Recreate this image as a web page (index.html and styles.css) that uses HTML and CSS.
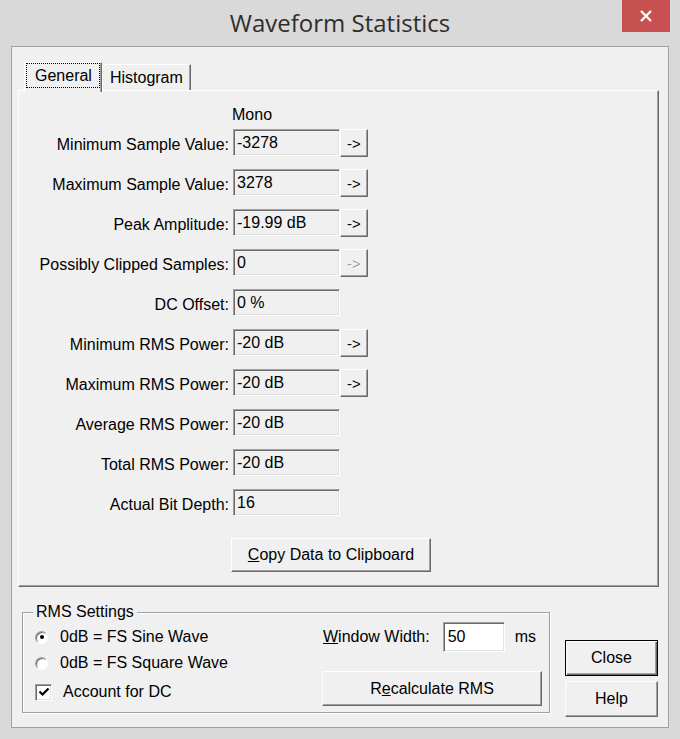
FILE: index.html
```html
<!DOCTYPE html>
<html>
<head>
<meta charset="utf-8">
<title>Waveform Statistics</title>
<link rel="stylesheet" href="styles.css">
</head>
<body>
<div class="window">
  <div class="titlebar">
    <h1 class="title">Waveform Statistics</h1>
    <div class="close-x">
      <svg width="12" height="12" viewBox="0 0 12 12"><path d="M1 1L11 11M11 1L1 11" stroke="#fff" stroke-width="2.3" fill="none"/></svg>
    </div>
  </div>
  <div class="client">
    <div class="tabs">
      <div class="tab active"><span class="focus">General</span></div>
      <div class="tab">Histogram</div>
    </div>
    <div class="panel">
      <div class="col-head">Mono</div>
      <div class="stats">
        <div class="label">Minimum Sample Value:</div>
        <div class="valcell"><div class="field">-3278</div><div class="btn arrow">-&gt;</div></div>
        <div class="label">Maximum Sample Value:</div>
        <div class="valcell"><div class="field">3278</div><div class="btn arrow">-&gt;</div></div>
        <div class="label">Peak Amplitude:</div>
        <div class="valcell"><div class="field">-19.99 dB</div><div class="btn arrow">-&gt;</div></div>
        <div class="label">Possibly Clipped Samples:</div>
        <div class="valcell"><div class="field">0</div><div class="btn arrow disabled">-&gt;</div></div>
        <div class="label">DC Offset:</div>
        <div class="valcell"><div class="field">0 %</div></div>
        <div class="label">Minimum RMS Power:</div>
        <div class="valcell"><div class="field">-20 dB</div><div class="btn arrow">-&gt;</div></div>
        <div class="label">Maximum RMS Power:</div>
        <div class="valcell"><div class="field">-20 dB</div><div class="btn arrow">-&gt;</div></div>
        <div class="label">Average RMS Power:</div>
        <div class="valcell"><div class="field">-20 dB</div></div>
        <div class="label">Total RMS Power:</div>
        <div class="valcell"><div class="field">-20 dB</div></div>
        <div class="label">Actual Bit Depth:</div>
        <div class="valcell"><div class="field">16</div></div>
      </div>
      <div class="btn copy"><span><u>C</u>opy Data to Clipboard</span></div>
    </div>
    <div class="bottom">
      <div class="group">
        <div class="group-title">RMS Settings</div>
        <div class="group-body">
          <div class="options">
            <div class="opt first"><span class="radio checked"></span><span>0dB = FS Sine Wave</span></div>
            <div class="opt"><span class="radio"></span><span>0dB = FS Square Wave</span></div>
            <div class="opt check-row"><span class="checkbox"><svg width="12" height="12" viewBox="0 0 12 12"><path d="M1.5 5.5L4.5 8.5L10.5 2.5" stroke="#000" stroke-width="2.2" fill="none"/></svg></span><span>Account for DC</span></div>
          </div>
          <div class="rms-right">
            <div class="ww-row">
              <span class="ww-label"><u>W</u>indow Width:</span>
              <div class="input">50</div>
              <span class="ms">ms</span>
            </div>
            <div class="btn recalc"><span>R<u>e</u>calculate RMS</span></div>
          </div>
        </div>
      </div>
      <div class="side">
        <div class="btn default">Close</div>
        <div class="btn">Help</div>
      </div>
    </div>
  </div>
</div>
</body>
</html>
```
FILE: styles.css
```css
* { box-sizing: border-box; }
html, body { margin: 0; padding: 0; }
body {
  width: 680px;
  height: 739px;
  overflow: hidden;
  background: #d9d9d9;
  font-family: "Liberation Sans", Arial, sans-serif;
  font-size: 16px;
  color: #000;
}
.window {
  height: 739px;
  display: flex;
  flex-direction: column;
}
.titlebar {
  height: 46px;
  display: grid;
  grid-template-columns: 1fr auto 1fr;
}
.title {
  grid-column: 2;
  align-self: center;
  margin: 0;
  font-family: "Open Sans", "Noto Sans", sans-serif;
  font-weight: 400;
  font-size: 24px;
  color: #2e2e2e;
  line-height: 30px;
}
.close-x {
  grid-column: 3;
  justify-self: end;
  align-self: start;
  width: 48px;
  height: 32px;
  margin-right: 10px;
  background: #c75050;
  display: flex;
  align-items: center;
  justify-content: center;
}
.client {
  flex: 1;
  margin: 0 11px 11px;
  background: #f0f0f0;
  border: 1px solid #a0a0a0;
  padding: 15px 9px 0 6px;
  display: flex;
  flex-direction: column;
}
.tabs {
  display: flex;
  align-items: flex-end;
  height: 28px;
  padding-left: 6px;
}
.tab {
  height: 26px;
  padding: 0 7px;
  border-left: 1px solid #fff;
  border-top: 1px solid #fff;
  border-right: 1px solid #696969;
  box-shadow: inset -1px 0 #a0a0a0;
  line-height: 25px;
  background: #f0f0f0;
}
.tab.active {
  height: 30px;
  margin-bottom: -2px;
  padding: 0 1px;
  position: relative;
  z-index: 1;
}
.focus {
  display: block;
  height: 25px;
  line-height: 23px;
  border: 1px dotted #000;
  padding: 0 7px 0 8px;
}
.panel {
  border-top: 1px solid #fff;
  border-left: 1px solid #fff;
  border-right: 1px solid #696969;
  border-bottom: 1px solid #696969;
  box-shadow: inset -1px -1px #a0a0a0;
  padding: 15px 0 14px 0;
}
.col-head {
  margin-left: 213px;
  line-height: 18px;
  margin-bottom: 5px;
}
.stats {
  display: grid;
  grid-template-columns: 210px auto;
  column-gap: 4px;
  row-gap: 12px;
  grid-auto-rows: 28px;
  justify-content: start;
}
.label {
  text-align: right;
  align-self: center;
  white-space: nowrap;
  line-height: 18px;
  padding-top: 3px;
}
.valcell { display: flex; align-items: flex-start; }
.field {
  width: 107px;
  height: 27px;
  border: 1px solid;
  border-color: #a0a0a0 #fff #fff #a0a0a0;
  box-shadow: inset 1px 1px #696969, inset -1px -1px #e3e3e3;
  padding: 1px 0 0 3px;
  line-height: 23px;
  white-space: nowrap;
}
.btn {
  background: #f0f0f0;
  border: 1px solid;
  border-color: #fff #696969 #696969 #fff;
  box-shadow: inset -1px -1px #a0a0a0;
  display: flex;
  align-items: center;
  justify-content: center;
  white-space: nowrap;
}
.arrow {
  width: 28px;
  height: 28px;
  font-size: 15px;
}
.arrow.disabled {
  color: #a0a0a0;
  text-shadow: 1px 1px #fff;
}
.copy {
  margin: 21px 0 0 212px;
  width: 200px;
  height: 34px;
}
.bottom {
  display: flex;
  padding-left: 4px;
}
.group {
  width: 528px;
  margin-top: 25px;
  margin-bottom: 14px;
  border: 1px solid #a0a0a0;
  box-shadow: inset 1px 1px #fff, 1px 1px #fff;
  padding: 0 7px 6px 12px;
  display: flex;
  flex-direction: column;
}
.group-title {
  align-self: flex-start;
  margin: -10px 0 0 -2px;
  padding: 0 3px;
  background: #f0f0f0;
  line-height: 18px;
}
.group-body {
  display: flex;
  justify-content: space-between;
}
.options { display: flex; flex-direction: column; }
.opt {
  display: flex;
  align-items: center;
  height: 26px;
  gap: 12px;
  white-space: nowrap;
}
.opt.first { margin-top: 3px; }
.opt.check-row { margin-top: 3px; gap: 11px; }
.radio {
  width: 13px;
  height: 13px;
  border-radius: 50%;
  background: #fff;
  border: 1px solid;
  border-color: #a0a0a0 #fff #fff #a0a0a0;
  box-shadow: inset 1px 1px #696969;
  display: flex;
  align-items: center;
  justify-content: center;
}
.radio.checked::after {
  content: "";
  width: 4px;
  height: 4px;
  border-radius: 50%;
  background: #000;
}
.checkbox {
  width: 17px;
  height: 17px;
  background: #fff;
  border: 1px solid;
  border-color: #a0a0a0 #fff #fff #a0a0a0;
  box-shadow: inset 1px 1px #696969, inset -1px -1px #e3e3e3;
  display: flex;
  align-items: center;
  justify-content: center;
}
.rms-right {
  width: 220px;
  margin-top: 1px;
  display: flex;
  flex-direction: column;
}
.ww-row {
  display: flex;
  align-items: center;
  height: 30px;
  padding-left: 1px;
}
.ww-label { white-space: nowrap; }
.input {
  width: 62px;
  height: 30px;
  margin-left: 13px;
  background: #fff;
  border: 1px solid;
  border-color: #a0a0a0 #fff #fff #a0a0a0;
  box-shadow: inset 1px 1px #696969, inset -1px -1px #e3e3e3;
  padding-left: 4px;
  line-height: 27px;
}
.ms { margin-left: 10px; }
.recalc {
  margin-top: 19px;
  height: 35px;
}
.side {
  display: flex;
  flex-direction: column;
  gap: 5px;
  margin: 53px 0 0 15px;
}
.side .btn {
  width: 93px;
  height: 36px;
}
.side .btn.default {
  border-color: #000;
  box-shadow: inset 1px 1px #fff, inset -1px -1px #696969, inset -2px -2px #a0a0a0;
}
```
